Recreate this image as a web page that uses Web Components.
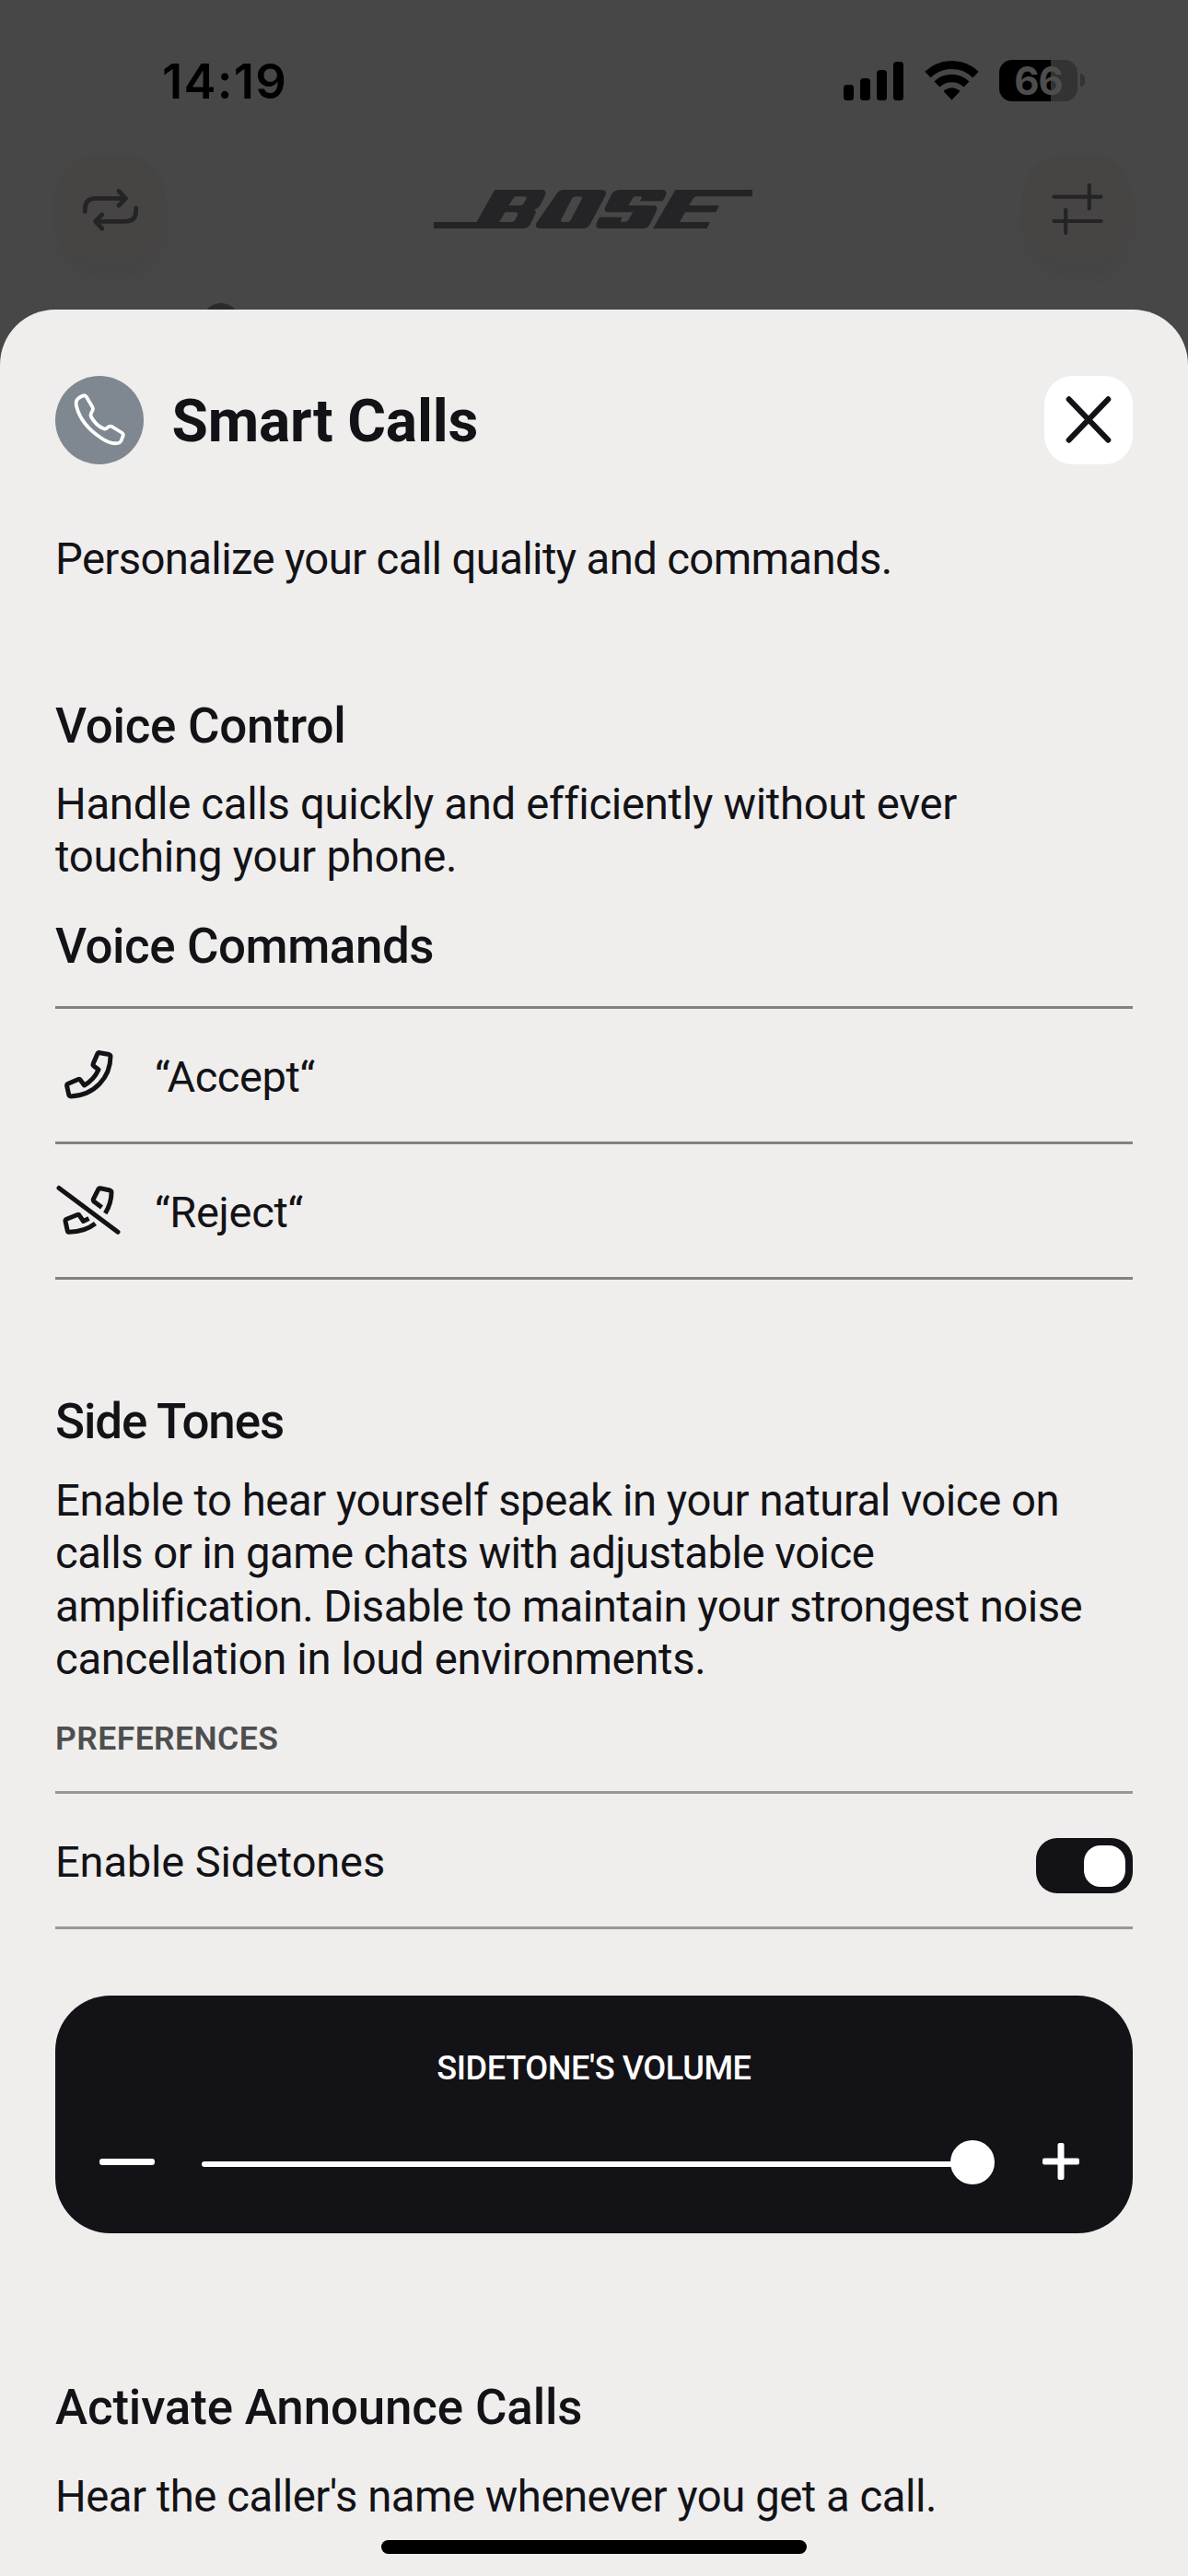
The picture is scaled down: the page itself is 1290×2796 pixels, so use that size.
<!DOCTYPE html>
<html lang="en">
<head>
<meta charset="utf-8">
<title>Smart Calls</title>
<style>
html,body{margin:0;padding:0;background:#474747}
body{font-family:Roboto,"Liberation Sans",sans-serif;color:#131217}
</style>
</head>
<body>
<phone-screen>
  <status-bar slot="backdrop" time="14:19" battery="66"></status-bar>
  <app-header slot="backdrop"></app-header>
  <bottom-sheet>
    <sheet-header heading="Smart Calls"></sheet-header>
    <text-block style="--mt:73px"><text-line style="--ls:-.65px">Personalize your call quality and commands.</text-line></text-block>

    <text-block kind="heading" style="--mt:122px"><text-line style="--ls:-.25px">Voice Control</text-line></text-block>
    <text-block style="--mt:23px"><text-line style="--ls:-.32px">Handle calls quickly and efficiently without ever</text-line><text-line style="--ls:-.23px">touching your phone.</text-line></text-block>
    <text-block kind="heading" style="--mt:37px"><text-line style="--ls:-.44px">Voice Commands</text-line></text-block>
    <row-list style="--mt:33px;--rule:#828282">
      <list-row><call-icon slot="icon" name="accept"></call-icon><text-line style="--ls:-.43px">“Accept“</text-line></list-row>
      <list-row><call-icon slot="icon" name="reject"></call-icon><text-line style="--ls:-.3px">“Reject“</text-line></list-row>
    </row-list>

    <text-block kind="heading" style="--mt:122px"><text-line style="--ls:-1.12px">Side Tones</text-line></text-block>
    <text-block style="--mt:24px"><text-line style="--ls:-.46px">Enable to hear yourself speak in your natural voice on</text-line><text-line style="--ls:-.56px">calls or in game chats with adjustable voice</text-line><text-line style="--ls:-.54px">amplification. Disable to maintain your strongest noise</text-line><text-line style="--ls:-.36px">cancellation in loud environments.</text-line></text-block>
    <text-block kind="caption" style="--mt:36.4px"><text-line style="--ls:.44px">PREFERENCES</text-line></text-block>
    <row-list style="--mt:35px;--rule:#979796">
      <list-row><text-line style="--ls:-.14px">Enable Sidetones</text-line><toggle-switch slot="control"></toggle-switch></list-row>
    </row-list>
    <volume-card><text-line style="--ls:-.44px">SIDETONE'S VOLUME</text-line></volume-card>

    <text-block kind="heading" style="--mt:157px"><text-line style="--ls:-.15px">Activate Announce Calls</text-line></text-block>
    <text-block style="--mt:36px"><text-line style="--ls:-.5px">Hear the caller's name whenever you get a call.</text-line></text-block>
  </bottom-sheet>
</phone-screen>
<script>
const define = (name, html) => customElements.define(name, class extends HTMLElement {
  constructor() {
    super();
    const t = document.createElement('template');
    t.innerHTML = typeof html === 'function' ? html(this) : html;
    this.attachShadow({ mode: 'open' }).append(t.content.cloneNode(true));
  }
});

define('phone-screen', `<style>
:host{display:flex;flex-direction:column;position:relative;width:1290px;height:2796px;overflow:hidden;background:#474747}
.back{flex:none;height:336px;overflow:hidden}
.home{position:absolute;left:414px;bottom:24px;width:462px;height:15px;border-radius:8px;background:#000}
.peek{width:40px;height:40px;border-radius:50%;background:#2b2b2c;margin:42px 0 0 220px}
</style><div class="back"><slot name="backdrop"></slot><div class="peek"></div></div><slot></slot><div class="home"></div>`);

define('status-bar', el => `<style>
:host{display:flex;justify-content:space-between;align-items:center;box-sizing:border-box;height:167px;padding:7px 112px 0 176px;color:#000;font-family:Inter,sans-serif;font-weight:600}
.time{font-size:52.5px;letter-spacing:1.3px;line-height:60px;padding-top:2px}
.right{display:flex;align-items:center}
.sig{margin-right:22px}.wifi{margin-right:22px}
.bat{width:85px;height:45px;border-radius:14px;background:linear-gradient(90deg,#000 56px,#333 56px);display:flex;align-items:center;justify-content:center;font-size:42px;line-height:45px;letter-spacing:-1px;color:#4d4d4d;font-weight:700}
.nub{width:5px;height:14px;margin-left:3px;border-radius:0 5px 5px 0;background:#343434}
svg{display:block}
</style><div class="time">${el.getAttribute('time')}</div><div class="right">
<svg class="sig" width="66" height="43" viewBox="0 0 66 43"><rect y="26" width="11" height="17" rx="3.5"/><rect x="18" y="19" width="11" height="24" rx="3.5"/><rect x="36" y="10" width="11" height="33" rx="3.5"/><rect x="54" y="1" width="11" height="42" rx="3.5"/></svg>
<svg class="wifi" width="59" height="43" viewBox="0 0 59 43"><g fill="none" stroke="#000"><path stroke-width="9" d="M3.45 15A37.5 37.5 0 0 1 55.55 15"/><path stroke-width="8.5" d="M13.5 25.5A23 23 0 0 1 45.5 25.5"/></g><path d="M29.5 42.5L20.5 33Q29.5 25.5 38.5 33Z"/></svg>
<div class="bat">${el.getAttribute('battery')}</div><div class="nub"></div></div>`);

define('app-header', `<style>
:host{display:flex;justify-content:space-between;align-items:center;height:120px;padding:0 60px}
.btn{width:120px;height:120px;border-radius:48px;background:#474444;box-shadow:0 18px 20px -8px rgba(0,0,0,.05)}
svg{display:block}.logo{margin-right:2px}
</style>
<div class="btn"><svg width="120" height="120" fill="none" stroke="#242426" stroke-width="4.8" stroke-linecap="round" stroke-linejoin="round"><path d="M32.3 62.5V60Q32.3 48.3 44 48.3H76M69 40.5L76.5 48.3L69 56M87.7 59V61.5Q87.7 73.3 76 73.3H44M50.8 66L43.6 73.3L50.8 81"/></svg></div>
<svg class="logo" width="346" height="42" fill="#242426" fill-rule="evenodd"><path d="M0 35H46.5L66.2 0H117Q123 0 121 6L116 16Q114 20 109 21.5Q112 22.5 110 27L104.5 38Q102 42 97 42H0ZM86.6 9Q87.5 7.2 89 7.2H98.5Q101.5 7.2 100.5 10L97.5 15Q96.5 17 94 17H81.5ZM77.5 24.3H88.5Q92 24.3 91 27.5L88 33Q87 35 84.5 35H71Z"/><path d="M133 5Q136 0 141 0H182Q189 0 186.5 6L170 37Q167.500 42 162 42H116Q109 42 111.500 36ZM150 9.500L138.500 32Q137 35 140.500 35H145Q147.500 35 149 32.500L160.500 10.500Q162 7.200 158.500 7.200H154Q151.500 7.200 150 9.500Z"/><path d="M203 0H248Q254 0 252 6L248.500 12.300H224L225.800 9Q226.500 7.200 224.500 7.200H219Q217 7.200 216 9L211.500 17H238Q244 17 242 22.500L235 37Q232.500 42 226.500 42H181Q175 42 176.500 37L179.800 29.700H205L203 33Q202.300 34.800 204 34.800H208Q210 34.800 211 33L216.400 24.300H190Q184 24.300 186 19L193 5Q196 0 203 0Z"/><path d="M262.400 0H346V7.200H286Q283 7.200 282 9L277 17H310L306.500 24.300H273L267 35H300L296.600 42H238Z"/></svg>
<div class="btn"><svg width="120" height="120" stroke="#242426" stroke-width="4.200" stroke-linecap="round"><path d="M34.500 46.700H85.500M34.500 73H85.500M72.800 34V59.500M47.200 60.500V86"/></svg></div>`);

define('bottom-sheet', `<style>
:host{display:block;flex:1;min-height:0;overflow:hidden;box-sizing:border-box;padding:72px 60px 0;border-radius:60px 60px 0 0;background:#efeeec}
</style><slot></slot>`);

define('sheet-header', el => `<style>
:host{display:flex;align-items:center;height:96px}
.icon{width:96px;height:96px;border-radius:50%;background:#7f8790;margin-right:30.500px}
.title{flex:1;font-size:64px;line-height:76px;font-weight:700;letter-spacing:-.17px;padding-top:4px}
.close{width:96px;height:96px;border-radius:31px;background:#fff}
svg{display:block}
</style>
<div class="icon"><svg width="96" height="96" fill="none" stroke="#fff" stroke-width="3.800" stroke-linejoin="round"><path d="M25.500 24L30 21.500Q32.500 20.500 34 23L40.500 34Q41.500 36 40.500 37.500L39 40.500Q38 42.500 39 44.500Q44 53.500 52 57Q54 58 55.500 57L57.500 55.500Q59.500 54 61.500 55L72 61.500Q74.500 63 73.500 65.500L71.500 70.500Q70.500 72.500 68 73Q60 74.500 50 67.500Q28 53 23 33Q21.500 27 25.500 24Z"/></svg></div>
<div class="title">${el.getAttribute('heading')}</div>
<div class="close"><svg width="96" height="96" stroke="#131217" stroke-width="6" stroke-linecap="round"><path d="M26.700 25.300L69.300 69.700M69.300 25.300L26.700 69.700"/></svg></div>`);

define('text-block', `<style>
:host{display:block;margin-top:var(--mt,0);font-size:47.300px;line-height:57.400px}
:host(:not([kind])){padding-top:1.500px;margin-bottom:-1.500px}
:host([kind=heading]){font-size:52.900px;line-height:64px;font-weight:500}
:host([kind=caption]){font-size:35.500px;line-height:44px;font-weight:600;color:#4e4e50}
</style><slot></slot>`);

define('text-line', `<style>:host{display:block;white-space:nowrap;letter-spacing:var(--ls,0)}</style><slot></slot>`);

define('row-list', `<style>:host{display:block;margin-top:var(--mt,0);border-top:3px solid var(--rule)}</style><slot></slot>`);

define('list-row', `<style>
:host{display:flex;align-items:center;height:144px;border-bottom:3px solid var(--rule);font-size:47px;line-height:58px}
.label{flex:1;padding-top:4px}
</style><slot name="icon"></slot><div class="label"><slot></slot></div><slot name="control"></slot>`);

const callIcons = {
  accept: '<path d="M47 5.500L58.500 7.500Q60 8 60 9.500Q60 27 48 39.500Q36 52 17 53Q15 53 14.700 51L12.600 41.500Q12.500 40 14 39.300L25 34.500Q26.500 34 27.300 35.300L31.500 41Q42 35 47 24L41.800 20Q40.500 19 41.300 17.300L46 6.500Z"/>',
  reject: '<path d="M4 5.500L68 53.300" stroke-linecap="round"/><path d="M50.500 26.500L42.200 20.300Q40.800 19 41.500 17.300L46.800 6.800Q47.500 5.500 49 5.800L59.500 8Q61 8.500 61 10Q61 22 54.300 33M43.500 44Q32 53 15.500 53.300Q13.500 53.300 13.200 51.500L11 41.500Q10.800 40 12.300 39.300L24 34.500Q25.500 34 26.300 35.300L30.500 41.500L36.500 38.500"/>'
};
define('call-icon', el => `<style>:host{display:block;margin-right:36px}svg{display:block}</style>
<svg width="72" height="60" fill="none" stroke="#131217" stroke-width="5" stroke-linejoin="round">${callIcons[el.getAttribute('name')]}</svg>`);

define('toggle-switch', `<style>
:host{display:flex;justify-content:flex-end;align-items:center;box-sizing:border-box;width:105px;height:60px;margin-top:12px;padding-right:8px;border-radius:23px;background:#131217}
i{width:45px;height:45px;border-radius:18px;background:#fff}
</style><i></i>`);

define('volume-card', `<style>
:host{display:flex;flex-direction:column;box-sizing:border-box;height:257.700px;margin-top:72px;padding:57px 58px 0 48px;border-radius:60px;background:#131217;color:#fff}
.label{align-self:center;font-size:36.200px;line-height:44px;font-weight:500;margin-left:10px}
.row{display:flex;align-items:center;height:50px;margin-top:55px}
.minus{width:60px;height:7px;border-radius:3px;background:#fff;margin-top:-2px}
.track{flex:1;display:flex;align-items:center;margin:2px 52px 0 51px}
.fill{flex:1;height:6px;border-radius:3px 0 0 3px;background:#fff;margin-right:-4px;margin-top:2px}
.thumb{width:48px;height:48px;border-radius:50%;background:#fff;margin-top:-2px}
svg{display:block;margin-top:-2px}
</style><div class="label"><slot></slot></div>
<div class="row"><div class="minus"></div><div class="track"><div class="fill"></div><div class="thumb"></div></div>
<svg width="40" height="40" fill="#fff"><rect y="16.500" width="40" height="7" rx="2"/><rect x="16.500" width="7" height="40" rx="2"/></svg></div>`);
</script>
</body>
</html>
